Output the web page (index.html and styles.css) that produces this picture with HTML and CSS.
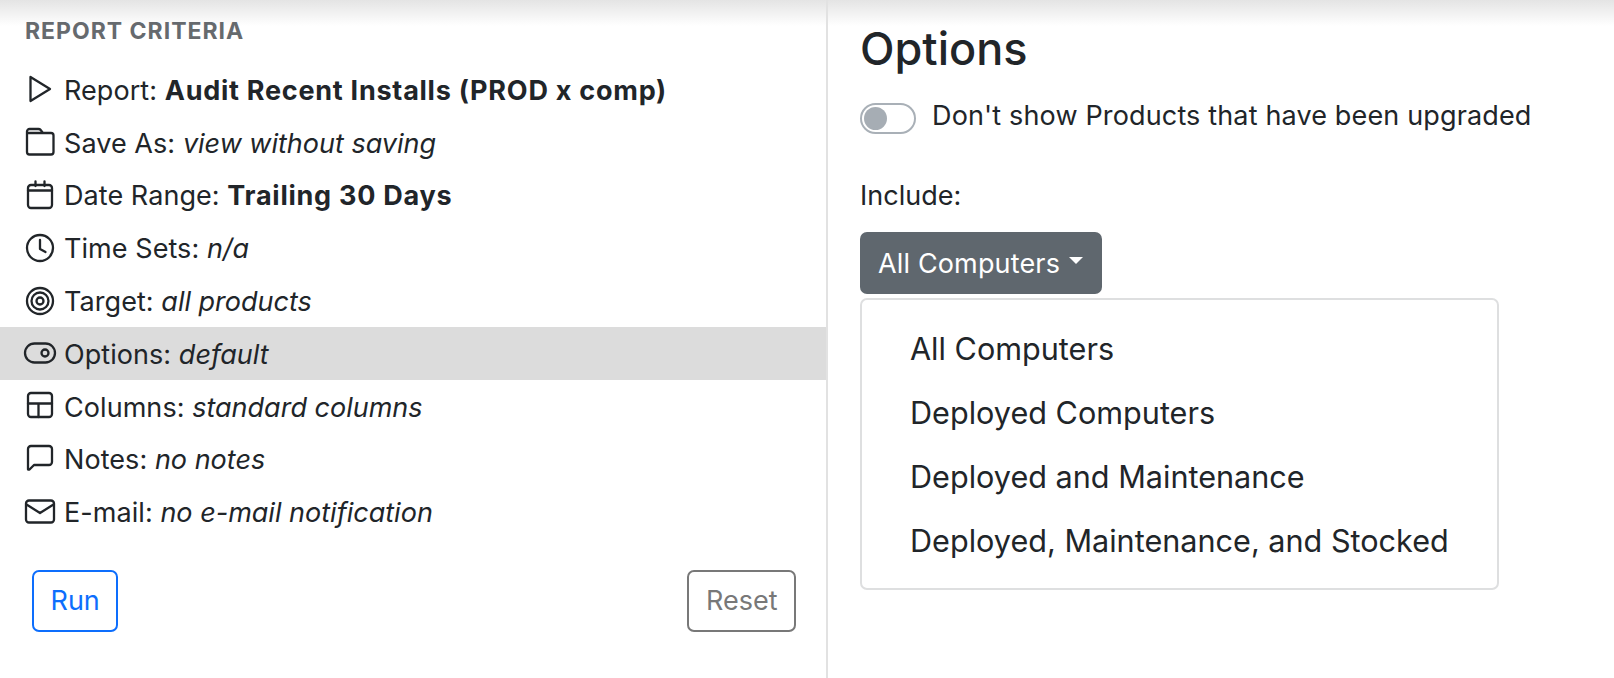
FILE: index.html
```html
<!DOCTYPE html>
<html lang="en">
<head>
<meta charset="utf-8">
<title>Report Criteria</title>
<link rel="stylesheet" href="styles.css">
</head>
<body>
<div class="shade"></div>
<main class="page">
  <section class="criteria">
    <h2 class="eyebrow">REPORT CRITERIA</h2>
    <ul class="rows">
      <li class="row"><svg class="ico" viewBox="0 0 28 28"><path d="M4.500 2 24 14 4.500 26Z"/></svg><span class="txt">Report: <b>Audit Recent Installs (PROD x comp)</b></span></li>
      <li class="row"><svg class="ico" viewBox="0 0 28 28"><path d="M1 5V3.500A2.500 2.500 0 0 1 3.500 1H12.500A3 3 0 0 1 14.600 1.900L17 5H25A2.500 2.500 0 0 1 27.500 7.500V24A2.500 2.500 0 0 1 25 26.500H3.500A2.500 2.500 0 0 1 1 24Z M1 5H17"/></svg><span class="txt">Save As: <i>view without saving</i></span></li>
      <li class="row"><svg class="ico" viewBox="0 0 28 28"><rect x="2" y="4" width="24" height="23" rx="3"/><path d="M2 9.500H26M9.500 .5V5M18.500 .5V5"/></svg><span class="txt">Date Range: <b>Trailing 30 Days</b></span></li>
      <li class="row"><svg class="ico" viewBox="0 0 28 28"><circle cx="14" cy="14" r="13"/><path d="M14 6V15L19.500 18"/></svg><span class="txt">Time Sets: <i>n/a</i></span></li>
      <li class="row"><svg class="ico" viewBox="0 0 28 28"><circle cx="14" cy="14" r="13"/><circle cx="14" cy="14" r="8.500"/><circle cx="14" cy="14" r="3.500"/></svg><span class="txt">Target: <i>all products</i></span></li>
      <li class="row active"><svg class="ico" viewBox="0 0 28 28"><rect x="-1" y="4.500" width="30" height="19" rx="9.500"/><circle cx="19" cy="14" r="3.500"/></svg><span class="txt">Options: <i>default</i></span></li>
      <li class="row"><svg class="ico" viewBox="0 0 28 28"><rect x="2" y="1" width="24" height="24" rx="3"/><path d="M2 11.500H26M12.500 11.500V25"/></svg><span class="txt">Columns: <i>standard columns</i></span></li>
      <li class="row"><svg class="ico" viewBox="0 0 28 28"><path d="M2 24.500V4A3 3 0 0 1 5 1H23A3 3 0 0 1 26 4V17A3 3 0 0 1 23 20H8L3.500 24.500Z"/></svg><span class="txt">Notes: <i>no notes</i></span></li>
      <li class="row"><svg class="ico" viewBox="0 0 28 28"><rect y="2.500" width="28" height="22" rx="3"/><path d="M.5 6.500 14 15 27.500 6.500"/></svg><span class="txt">E-mail: <i>no e-mail notification</i></span></li>
    </ul>
    <div class="actions">
      <button class="btn run" type="button">Run</button>
      <button class="btn reset" type="button">Reset</button>
    </div>
  </section>
  <section class="options">
    <h1 class="title">Options</h1>
    <div class="switch-line"><span class="switch"><span class="knob"></span></span><span class="switch-text">Don't show Products that have been upgraded</span></div>
    <div class="include">Include:</div>
    <button class="toggle" type="button">All Computers<span class="caret"></span></button>
    <ul class="menu">
      <li>All Computers</li>
      <li>Deployed Computers</li>
      <li>Deployed and Maintenance</li>
      <li>Deployed, Maintenance, and Stocked</li>
    </ul>
  </section>
</main>
</body>
</html>
```
FILE: styles.css
```css
* { box-sizing: border-box; }
html, body { height: 100%; }
body {
  margin: 0;
  overflow: hidden;
  background: #fff;
  color: #212529;
  font-family: Inter, "Liberation Sans", sans-serif;
  font-size: 27px;
  line-height: 40px;
}
.shade {
  position: absolute;
  top: 0; left: 0; right: 0;
  height: 26px;
  background: linear-gradient(#e4e4e4, #fff);
  pointer-events: none;
}
.page { display: flex; height: 678px; position: relative; }
.criteria {
  width: 828px;
  flex: none;
  border-right: 2px solid #e2e2e2;
  display: flex;
  flex-direction: column;
}
.eyebrow {
  margin: 15px 0 0 25px;
  font-size: 23px;
  line-height: 32px;
  font-weight: 700;
  color: #666a6e;
  letter-spacing: 1px;
}
.rows { list-style: none; margin: 16px 0 0; padding: 0; }
.row {
  display: flex;
  align-items: center;
  gap: 10px;
  height: 52.8px;
  padding-left: 26px;
  white-space: nowrap;
}
.txt { padding-top: 3px; letter-spacing: .06px; }
.txt b { letter-spacing: .75px; }
.txt i { letter-spacing: 0; }
.row.active { background: #dcdcdc; }
.ico {
  width: 28px;
  height: 28px;
  flex: none;
  overflow: visible;
  fill: none;
  stroke: #212529;
  stroke-width: 2.3;
  stroke-linejoin: round;
  stroke-linecap: round;
}
.actions {
  display: flex;
  justify-content: space-between;
  margin: 32px 30px 0 32px;
}
.btn {
  font: inherit;
  height: 62px;
  background: #fff;
  border-radius: 7px;
  border: 2px solid;
  padding: 0 16.5px;
}
.run { color: #0d6efd; border-color: #0d6efd; }
.reset { color: #787878; border-color: #787878; }
.options { flex: 1; padding-left: 32px; }
.title {
  margin: 21px 0 0;
  font-size: 45px;
  line-height: 55px;
  font-weight: 500;
}
.switch-line { display: flex; align-items: center; gap: 16px; margin-top: 20px; }
.switch-text { padding-bottom: 4px; letter-spacing: .15px; }
.switch {
  width: 56px;
  height: 31px;
  border: 2px solid #a9b0b7;
  border-radius: 16px;
  background: #fff;
  padding: 2px;
  display: block;
}
.knob { display: block; width: 23px; height: 23px; border-radius: 50%; background: #a6adb4; }
.include { margin-top: 36px; }
.toggle {
  display: flex;
  align-items: center;
  font: inherit;
  letter-spacing: .15px;
  color: #fff;
  background: #5f676e;
  border: 0;
  border-radius: 7px;
  height: 62px;
  padding: 2px 19px 0 18px;
  margin-top: 16px;
}
.caret {
  margin-left: 9px;
  margin-top: -8px;
  border-top: 7px solid #fff;
  border-left: 7px solid transparent;
  border-right: 7px solid transparent;
}
.menu {
  list-style: none;
  width: 639px;
  height: 292px;
  margin: 4px 0 0;
  padding: 17px 0;
  border: 2px solid #dedfe0;
  border-radius: 7px;
  font-size: 30.6px;
}
.menu li { height: 64px; line-height: 64px; padding-left: 48px; white-space: nowrap; }
```
